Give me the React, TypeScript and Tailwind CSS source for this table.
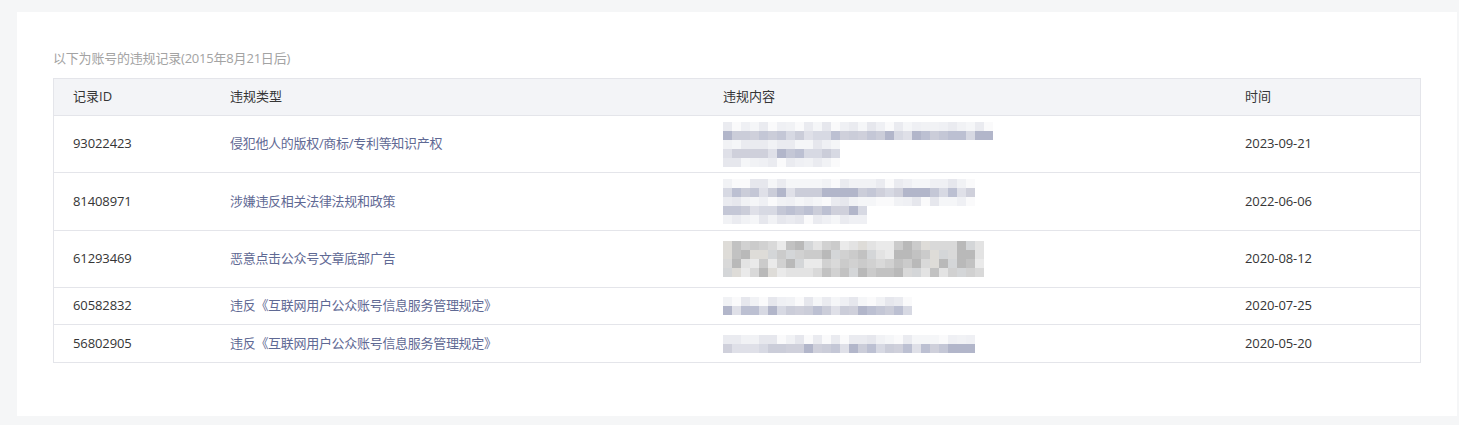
import React from 'react';

type Mosaic = { cols: number[]; tone: ('faint' | 'dark' | 'photo')[] };

interface Record {
  id: string;
  type: string;
  date: string;
  height: string;
  seed: number;
  mosaic: Mosaic;
}

const palettes = {
  faint: ['#eff0f4', '#f5f6f8', '#eaebf0', '#fafafb', '#e6e7ed', '#f1f2f5'],
  dark: ['#bcc0d2', '#cbcdd9', '#d7d9e3', '#c4c7d6', '#b2b6ca', '#dfe0e8', '#cfd0db'],
  photo: ['#d9d9d9', '#d1d1d1', '#e3e3e3', '#cbcbcb', '#dedcd8', '#c2c2c2', '#eaeaea', '#b9b9b9', '#d4d6d8'],
};

const records: Record[] = [
  {
    id: '93022423',
    type: '侵犯他人的版权/商标/专利等知识产权',
    date: '2023-09-21',
    height: 'h-[57px]',
    seed: 7,
    mosaic: { cols: [30, 30, 13, 13, 13], tone: ['faint', 'dark', 'faint', 'dark', 'faint'] },
  },
  {
    id: '81408971',
    type: '涉嫌违反相关法律法规和政策',
    date: '2022-06-06',
    height: 'h-[58px]',
    seed: 19,
    mosaic: { cols: [28, 28, 28, 16, 16], tone: ['faint', 'dark', 'faint', 'dark', 'faint'] },
  },
  {
    id: '61293469',
    type: '恶意点击公众号文章底部广告',
    date: '2020-08-12',
    height: 'h-[57px]',
    seed: 31,
    mosaic: { cols: [29, 29, 29, 29], tone: ['photo', 'photo', 'photo', 'photo'] },
  },
  {
    id: '60582832',
    type: '违反《互联网用户公众账号信息服务管理规定》',
    date: '2020-07-25',
    height: 'h-[37px]',
    seed: 43,
    mosaic: { cols: [21, 21], tone: ['faint', 'dark'] },
  },
  {
    id: '56802905',
    type: '违反《互联网用户公众账号信息服务管理规定》',
    date: '2020-05-20',
    height: 'h-[37px]',
    seed: 57,
    mosaic: { cols: [28, 28], tone: ['faint', 'dark'] },
  },
];

// small seeded random so the mosaic looks the same every render
function rng(seed: number) {
  let s = seed;
  return () => {
    s = (s * 9301 + 49297) % 233280;
    return s / 233280;
  };
}

function Blurred({ mosaic, seed }: { mosaic: Mosaic; seed: number }) {
  const rand = rng(seed);
  return (
    <div className="flex flex-col blur-[0.4px]">
      {mosaic.cols.map((n, r) => {
        const pal = palettes[mosaic.tone[r]];
        return (
          <div key={r} className="flex">
            {Array.from({ length: n }).map((_, c) => (
              <div
                key={c}
                className="h-[9px] w-[9px]"
                style={{ backgroundColor: pal[Math.floor(rand() * pal.length)] }}
              />
            ))}
          </div>
        );
      })}
    </div>
  );
}

export default function App() {
  return (
    <div
      className="min-h-[425px] bg-[#f5f6f7] pt-[12px] pb-[9px] pl-[17px] pr-[2px]"
      style={{ fontFamily: '"Open Sans", "Noto Sans CJK SC", sans-serif' }}
    >
      <div className="bg-white px-[36px] pt-[37px] pb-[53px]">
        <div className="text-[13px] leading-[18px] text-[#a3a3a3] mb-[11px] tracking-[-0.2px]">
          以下为账号的违规记录(2015年8月21日后)
        </div>
        <div className="border border-[#e4e5ea] text-[13px] text-[#353535]">
          <div className="grid grid-cols-[156px_493px_522px_1fr] h-[37px] items-center bg-[#f3f4f7] border-b border-[#e4e5ea]">
            <div className="pl-[19px]">记录ID</div>
            <div className="pl-[20px]">违规类型</div>
            <div className="pl-[20px]">违规内容</div>
            <div className="pl-[20px]">时间</div>
          </div>
          {records.map((r, i) => (
            <div
              key={r.id}
              className={`grid grid-cols-[156px_493px_522px_1fr] items-center ${r.height} ${
                i < records.length - 1 ? 'border-b border-[#e4e5ea]' : ''
              }`}
            >
              <div className="pl-[19px] tracking-[-0.1px]">{r.id}</div>
              <div className="pl-[20px] text-[#5f6994] tracking-[-0.3px]">{r.type}</div>
              <div className="pl-[20px]">
                <Blurred mosaic={r.mosaic} seed={r.seed} />
              </div>
              <div className="pl-[20px] tracking-[-0.1px]">{r.date}</div>
            </div>
          ))}
        </div>
      </div>
    </div>
  );
}
